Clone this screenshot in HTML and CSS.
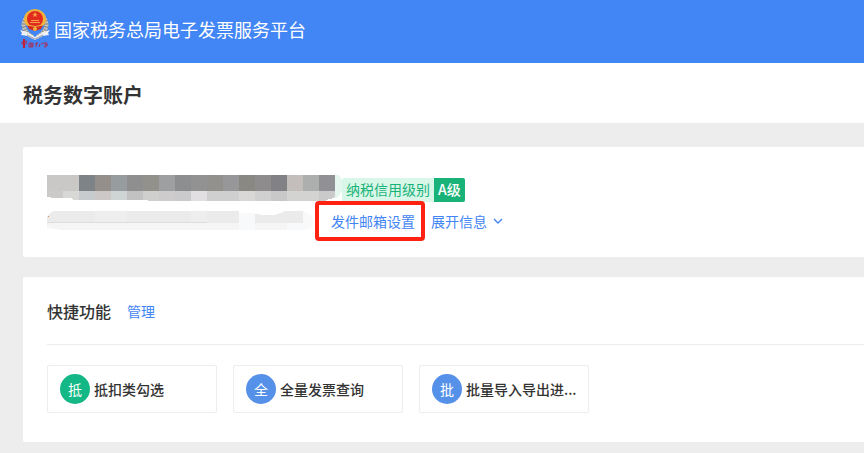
FILE: index.html
```html
<!DOCTYPE html>
<html lang="zh-CN">
<head>
  <meta charset="UTF-8">
  <meta name="viewport" content="width=device-width, initial-scale=1.0">
  <title>税务数字账户</title>
  <link rel="stylesheet" href="styles.css">
</head>
<body>
  <header class="header">
    <svg class="logo" width="30" height="40" viewBox="0 0 30 40" aria-hidden="true">
      <!-- wheat ears -->
      <path d="M6 9C1 15 4 24 13 28M24 9C29 15 26 24 17 28" fill="none" stroke="#c9c5b8" stroke-width="4"/>
      <path d="M6 9C1 15 4 24 13 28M24 9C29 15 26 24 17 28" fill="none" stroke="#7d808a" stroke-width="4" stroke-dasharray="1 2"/>
      <!-- ribbon -->
      <path d="M0 21l7 2 8 5 8-5 7-2-2 3 1 2-7 1-7 4-7-4-7-1 1-2z" fill="#f1f1f4"/>
      <path d="M7 26l8 4 8-4" fill="none" stroke="#9a9eac" stroke-width="1"/>
      <!-- emblem -->
      <ellipse cx="15" cy="10" rx="11" ry="10" fill="#f0b33c"/>
      <circle cx="15" cy="10" r="8" fill="#e22b1e"/>
      <path d="M15 3l1 2h2l-2 1 1 2-2-1-2 1 1-2-2-1h2zM11 11h8v1h-8zM10 13h10v1H10z" fill="#f8a044"/>
      <path d="M7 16h16l-2 4-6 2-6-2z" fill="#d92a1d"/>
      <path d="M7 16q8 3 16 0" fill="none" stroke="#f0b33c" stroke-width="1"/>
      <circle cx="15" cy="20" r="2" fill="#f0b33c"/>
      <!-- brush lettering -->
      <g fill="none" stroke="#a8325f" stroke-width="1">
        <path d="M2 33l5-1-1 3-4 0zM9 34h4v4H9zM10 36h3M11 34v4M15 35l3-1M17 33l-1 5M20 35l-1 3M21 35l3-1M24 34l3 0-1 4-2 0M24 36h4"/>
        <path d="M4 30v9" stroke="#c22236" stroke-width="2"/>
      </g>
    </svg>
    <span class="site-name">国家税务总局电子发票服务平台</span>
  </header>

  <div class="title-bar">
    <h1>税务数字账户</h1>
  </div>

  <main class="content">
    <section class="card account">
      <div class="name-row">
        <!-- masked company name -->
        <svg class="mask" width="295" height="27" viewBox="0 0 295 27" shape-rendering="crispEdges" aria-hidden="true">
          <path d="M286 0h5q5 3 5 10t-6 13h-4z" fill="#e5f6ef"/>
          <path d="M0 0h32v16H0z" fill="#c9c8c6"/>
          <path d="M32 0h16v16H32z" fill="#7e8388"/>
          <path d="M48 0h16v16H48z" fill="#958f8b"/>
          <path d="M64 0h16v16H64z" fill="#979d9e"/>
          <path d="M80 0h16v16H80z" fill="#8f8f8f"/>
          <path d="M96 0h16v16H96z" fill="#93918c"/>
          <path d="M112 0h16v16h-16z" fill="#9d9fa1"/>
          <path d="M128 0h16v16h-16z" fill="#8c8e90"/>
          <path d="M144 0h16v16h-16z" fill="#929292"/>
          <path d="M160 0h16v16h-16z" fill="#93918d"/>
          <path d="M176 0h16v16h-16z" fill="#97979a"/>
          <path d="M192 0h16v16h-16z" fill="#8a8883"/>
          <path d="M208 0h16v16h-16z" fill="#8f8c8e"/>
          <path d="M224 0h16v16h-16z" fill="#828186"/>
          <path d="M240 0h16v16h-16z" fill="#c3bebb"/>
          <path d="M256 0h16v16h-16z" fill="#adafaf"/>
          <path d="M272 0h16v16h-16z" fill="#919195"/>
          <path d="M0 16h16v7H8l-8-1z" fill="#cbcac8"/>
          <path d="M16 16h16v9h-5l-3-2h-8z" fill="#d8d8d7"/>
          <path d="M32 16h16v9H32z" fill="#c8cbcd"/>
          <path d="M48 16h16v9H48z" fill="#cbc8c7"/>
          <path d="M64 16h16v9H64z" fill="#cfd5d5"/>
          <path d="M80 16h16v9H80z" fill="#c2c2c2"/>
          <path d="M96 16h16v10h-10l-2-1h-4z" fill="#cfcfcd"/>
          <path d="M112 16h16v10h-16z" fill="#cdcbcc"/>
          <path d="M128 16h16v10h-16z" fill="#cacacd"/>
          <path d="M144 16h16v10h-16z" fill="#e1dfe1"/>
          <path d="M160 16h32v10h-32z" fill="#cfcfcf"/>
          <path d="M192 16h16v10h-16z" fill="#dad8d6"/>
          <path d="M208 16h16v10h-16z" fill="#d0d0d0"/>
          <path d="M224 16h16v10h-16z" fill="#c8c8c8"/>
          <path d="M240 16h32v10h-32z" fill="#d3d3d2"/>
          <path d="M272 16h16v6q-2 2-6 2-2 2-10 2z" fill="#cacacb"/>
        </svg>
        <div class="credit">
          <span class="credit-label">纳税信用级别</span>
          <span class="credit-level">A级</span>
        </div>
      </div>
      <div class="info-row">
        <!-- masked taxpayer number -->
        <svg class="mask" width="268" height="20" viewBox="0 0 268 20" shape-rendering="crispEdges" aria-hidden="true">
          <path d="M0 12h258v5q-6 2-20 2H16L0 17z" fill="#f5f5f5"/>
          <path d="M0 12V6q2-5 8-6h248v12z" fill="#ebebeb"/>
          <path d="M48 0h32v12H48zM144 0h16v12h-16z" fill="#eeeeee"/>
          <path d="M192 0h46q-12 7-28 3l-8 2-10-1z" fill="#ffffff"/>
          <path d="M192 2h16v17h-16zM240 12h16v7h-16z" fill="#f8f9fb"/>
          <path d="M0 11h160v1H0z" fill="#dedede"/>
          <path d="M256 0q12 4 10 14-4 5-10 5z" fill="#f9f9f9"/>
          <path d="M1 5h1v1H1z" fill="#d98a63"/>
        </svg>
        <a class="link mailbox" href="#">发件邮箱设置</a>
        <button class="expand" type="button">
          展开信息
          <svg width="10" height="6" viewBox="0 0 10 6" aria-hidden="true">
            <path d="M1 1l4 4 4-4" fill="none" stroke="#4285f4" stroke-width="1.4"/>
          </svg>
        </button>
      </div>
    </section>

    <section class="card quick">
      <div class="quick-head">
        <h2>快捷功能</h2>
        <a class="link" href="#">管理</a>
      </div>
      <div class="quick-list">
        <a class="quick-item" href="#"><span class="badge green">抵</span><span class="quick-name">抵扣类勾选</span></a>
        <a class="quick-item" href="#"><span class="badge">全</span><span class="quick-name">全量发票查询</span></a>
        <a class="quick-item" href="#"><span class="badge">批</span><span class="quick-name">批量导入导出进...</span></a>
      </div>
    </section>
  </main>
</body>
</html>
```

FILE: styles.css
```css
* {
  box-sizing: border-box;
}
body {
  margin: 0;
  min-height: 100vh;
  background-color: #ededed;
  color: #333;
  font-family: "Noto Sans CJK SC", sans-serif;
  font-size: 14px;
  line-height: 24px;
}
h1, h2 {
  margin: 0;
}
a {
  text-decoration: none;
}
.header {
  display: flex;
  align-items: center;
  gap: 4px;
  height: 63px;
  padding: 0 20px 6px;
  background-color: #4285f4;
}
.site-name {
  color: #fff;
  font-size: 18px;
}
.title-bar {
  display: flex;
  align-items: center;
  height: 60px;
  padding: 4px 23px 0;
  background-color: #fff;
}
.title-bar h1 {
  font-size: 20px;
  font-weight: bold;
}
.content {
  display: flex;
  flex-direction: column;
  gap: 20px;
  padding: 24px 0 0 23px;
}
.card {
  background-color: #fff;
  border-radius: 2px 0 0 2px;
}
.mask {
  flex: none;
}
.link {
  color: #4285f4;
}

/* account info */
.account {
  padding: 28px 24px 18px;
}
.name-row {
  display: flex;
  align-items: flex-end;
}
.credit {
  display: flex;
  border-radius: 2px;
  overflow: hidden;
  background-color: #d9f7e9;
  line-height: 22px;
}
.credit-label,
.credit-level {
  padding: 0 4px 2px;
}
.credit-label {
  color: #19b278;
}
.credit-level {
  background-color: #19b278;
  color: #fff;
  font-weight: 500;
}
.info-row {
  display: flex;
  align-items: center;
  gap: 16px;
  height: 37px;
}
.mailbox {
  position: relative;
}
/* highlight frame over the link */
.mailbox::after {
  content: "";
  position: absolute;
  inset: -8px -10px -8px -16px;
  border: 4px solid #ff2111;
  border-radius: 4px;
}
.expand {
  display: flex;
  align-items: center;
  gap: 6px;
  padding: 0;
  border: none;
  background: none;
  color: #4285f4;
  font: inherit;
  cursor: pointer;
}

/* quick functions */
.quick {
  padding: 22px 0 29px 24px;
}
.quick-head {
  display: flex;
  align-items: center;
  gap: 16px;
  padding-bottom: 21px;
  border-bottom: 1px solid #ededed;
}
.quick-head h2 {
  font-size: 16px;
  font-weight: 500;
}
.quick-list {
  display: flex;
  flex-wrap: wrap;
  gap: 16px;
  padding-top: 20px;
}
.quick-item {
  display: flex;
  align-items: center;
  gap: 4px;
  width: 170px;
  height: 48px;
  padding: 0 8px 0 12px;
  border: 1px solid #ededed;
  border-radius: 2px;
  color: #333;
}
.badge {
  flex: none;
  width: 30px;
  border-radius: 50%;
  background-color: #5590e9;
  color: #fff;
  line-height: 30px;
  text-align: center;
}
.badge.green {
  background-color: #13b886;
}
.quick-name {
  overflow: hidden;
  font-weight: 500;
  text-overflow: ellipsis;
  white-space: nowrap;
}
```
